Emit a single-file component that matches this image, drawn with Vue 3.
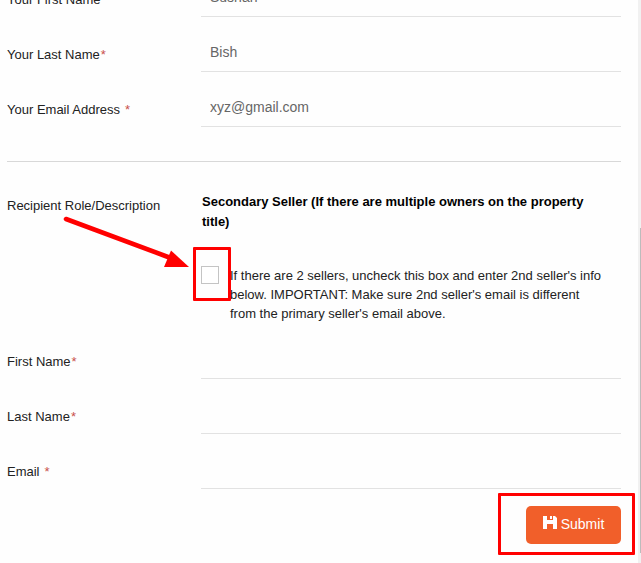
<script setup>
import { reactive, ref } from 'vue'

const owner = reactive([
  { id: 'your-first', label: 'Your First Name', type: 'text', value: 'Sushan' },
  { id: 'your-last', label: 'Your Last Name', type: 'text', value: 'Bish' },
  { id: 'your-email', label: 'Your Email Address', type: 'email', value: 'xyz@gmail.com', spaced: true },
])
const second = reactive([
  { id: 'first', label: 'First Name', type: 'text', value: '' },
  { id: 'last', label: 'Last Name', type: 'text', value: '' },
  { id: 'email', label: 'Email', type: 'email', value: '', spaced: true },
])
const secondSeller = ref(false)
</script>

<template>
  <div class="page">
    <form class="form" @submit.prevent>
      <div class="group group-owner">
        <div v-for="f in owner" :key="f.id" class="row">
          <label :for="f.id">{{ f.label }}<span class="req" :class="{ spaced: f.spaced }">*</span></label>
          <input :id="f.id" v-model="f.value" :type="f.type" class="field" />
        </div>
      </div>

      <div class="role">
        <div class="role-label">Recipient Role/Description</div>
        <div class="role-body">
          <h2>Secondary Seller (If there are multiple owners on the property title)</h2>
          <div class="choice">
            <span class="check-wrap">
              <input id="second-seller" v-model="secondSeller" type="checkbox" class="check" />
              <svg class="arrow" viewBox="0 0 130 60" width="130" height="60" aria-hidden="true">
                <path d="M6 8 L108 46" stroke="#f00" stroke-width="4.6" stroke-linecap="round" />
                <path d="M111 39.500 L129 56 L104 56 Z" fill="#f00" />
              </svg>
              <span class="mark mark-check"></span>
            </span>
            <label for="second-seller">If there are 2 sellers, uncheck this box and enter 2nd seller's info below. IMPORTANT: Make sure 2nd seller's email is different from the primary seller's email above.</label>
          </div>
        </div>
      </div>

      <div class="group">
        <div v-for="f in second" :key="f.id" class="row">
          <label :for="f.id">{{ f.label }}<span class="req" :class="{ spaced: f.spaced }">*</span></label>
          <input :id="f.id" v-model="f.value" :type="f.type" class="field" />
        </div>
      </div>

      <div class="actions">
        <div class="submit-wrap">
          <button type="submit" class="submit">
            <svg viewBox="0 0 14 13" width="14" height="13" aria-hidden="true">
              <path fill="#fff" fill-rule="evenodd" d="M0 0H4V4H10V0H12L14 2V13H10V8H4V13H0ZM7 0H9V3H7Z" />
            </svg>
            <span>Submit</span>
          </button>
          <span class="mark mark-submit"></span>
        </div>
      </div>
    </form>
    <div class="track" aria-hidden="true"><div class="thumb"></div></div>
  </div>
</template>

<style>
body {
  margin: 0;
  background: #fefefe;
}
</style>

<style scoped>
.page {
  display: flex;
  height: 100vh;
  overflow: hidden;
  font-family: "Liberation Sans", Arial, sans-serif;
  font-size: 13px;
  color: #222;
}
.form {
  flex: 1;
  min-width: 0;
  padding: 0 17px 0 7px;
}
.group-owner {
  margin-top: -38px;
  padding-bottom: 34px;
  border-bottom: 1px solid #d8d8d8;
}
.row,
.role {
  display: grid;
  grid-template-columns: 194px 1fr;
}
.row {
  height: 55px;
}
.row label {
  padding-top: 29px;
  line-height: 18px;
}
.req {
  margin-left: 1px;
  color: #c9504c;
}
.spaced {
  margin-left: 5px;
}
.field {
  box-sizing: border-box;
  width: 100%;
  height: 55px;
  padding: 15px 9px 0;
  border: 0;
  border-bottom: 1px solid #e2e2e2;
  border-radius: 0;
  outline: 0;
  background: transparent;
  font: inherit;
  font-size: 14px;
  color: #666;
}
.role {
  padding-top: 30px;
  padding-bottom: 2px;
}
.role-label {
  padding-top: 5px;
  line-height: 18px;
}
h2 {
  margin: 0;
  padding: 0 16px 0 1px;
  font-size: 13px;
  font-weight: 700;
  line-height: 20px;
  color: #000;
}
.choice {
  display: flex;
  gap: 11px;
  margin-top: 34px;
  padding-right: 16px;
  line-height: 19px;
}
.check-wrap {
  position: relative;
  flex: none;
  width: 18px;
  height: 18px;
}
.check {
  appearance: none;
  display: block;
  box-sizing: border-box;
  width: 18px;
  height: 18px;
  margin: 0;
  border: 1px solid #c4c4c4;
  background: #fff;
}
.check:checked {
  background: #f15f2a;
}
.mark {
  position: absolute;
  box-sizing: border-box;
  border: 3px solid #f00;
  border-radius: 1px;
  pointer-events: none;
}
.mark-check {
  inset: -19px -12px -17px -8px;
}
.role {
  padding-bottom: 1px;
}
.arrow {
  position: absolute;
  left: -141px;
  top: -55px;
  pointer-events: none;
}
.actions {
  display: flex;
  justify-content: flex-end;
  padding-top: 17px;
}
.submit-wrap {
  position: relative;
}
.submit {
  display: flex;
  align-items: center;
  justify-content: center;
  gap: 4px;
  width: 95px;
  height: 38px;
  padding: 0 0 2px;
  border: 0;
  border-radius: 5px;
  background: #f15f2a;
  font: inherit;
  font-size: 14px;
  color: #fff;
}
.submit svg {
  margin-bottom: 4px;
}
.mark-submit {
  inset: -13px -14px -11px -28px;
}
.track {
  display: flex;
  flex-direction: column;
  align-items: flex-end;
  width: 3px;
  padding: 228px 0 10px;
  box-sizing: border-box;
  background: #f1f1f1;
}
.thumb {
  flex: 1;
  width: 1px;
  background: #bcbcbc;
}
</style>
